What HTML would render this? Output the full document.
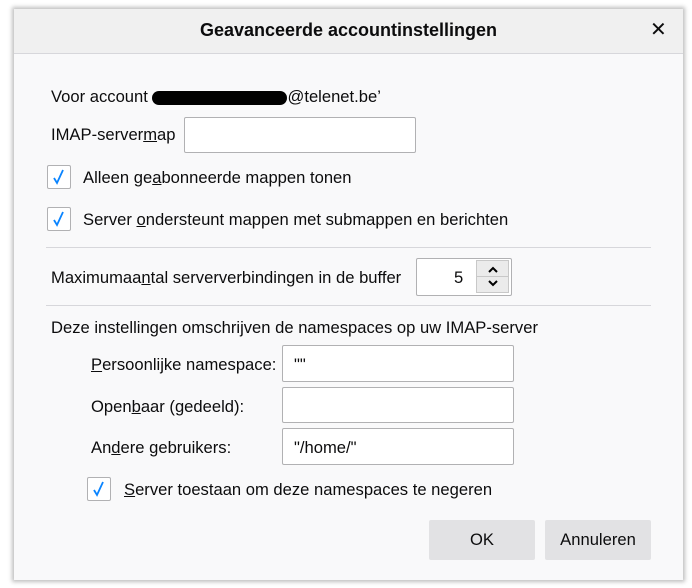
<html><head><style>
body{margin:0;width:692px;height:588px;background:#fff;position:relative;font-family:"Liberation Sans",sans-serif;font-size:16.6px;color:#0c0c0d;overflow:hidden}
.dlg{position:absolute;left:14px;top:9px;width:669px;height:571px;background:#f9f9fa;box-shadow:0 0 4px 2px rgba(0,0,0,.25)}
.hd{position:absolute;left:0;top:0;width:669px;height:44px;background:#f0f0f0;border-bottom:1px solid #d7d7db}
.a{position:absolute;white-space:nowrap}
.in{position:absolute;background:#fff;border:1px solid #b1b1b3;border-radius:2px;box-sizing:border-box}
.cb{position:absolute;width:24px;height:24px;background:#fff;border:1px solid #b1b1b3;border-radius:2px;box-sizing:border-box}
.hr{position:absolute;left:32px;width:605px;height:1px;background:#d7d7db}
.btn{position:absolute;background:#e2e2e4;border-radius:2px;text-align:center;line-height:40px;height:40px}
u{text-decoration:underline}
</style></head><body>
<div class="dlg">
<div class="hd"><div class="a" style="left:0;width:669px;text-align:center;top:11px;font-size:18px;font-weight:bold">Geavanceerde accountinstellingen</div>
<div class="a" style="left:636px;top:8px;font-size:20px">✕</div></div>
</div>
<div class="a" style="left:51px;top:87px">Voor account <span style="display:inline-block;width:135px;height:14px;background:#000;border-radius:8px;vertical-align:middle"></span>@telenet.be’</div>
<div class="a" style="left:51px;top:125px">IMAP-server<u>m</u>ap</div>
<div class="in" style="left:184px;top:117px;width:232px;height:36px"></div>
<div class="cb" style="left:47px;top:165px"><svg width="22" height="22"><path d="M6 12l3 5 6-13" fill="none" stroke="#0a84ff" stroke-width="1.8"/></svg></div>
<div class="a" style="left:83px;top:168px">Alleen ge<u>a</u>bonneerde mappen tonen</div>
<div class="cb" style="left:47px;top:207px"><svg width="22" height="22"><path d="M6 12l3 5 6-13" fill="none" stroke="#0a84ff" stroke-width="1.8"/></svg></div>
<div class="a" style="left:83px;top:210px">Server <u>o</u>ndersteunt mappen met submappen en berichten</div>
<div class="hr" style="top:247px;left:46px"></div>
<div class="a" style="left:51px;top:268px">Maximumaa<u>n</u>tal serververbindingen in de buffer</div>
<div class="in" style="left:416px;top:258px;width:96px;height:38px"></div>
<div class="a" style="left:454px;top:268px">5</div>
<div class="a" style="left:476px;top:260px;width:33px;height:33px;background:#ebebeb;border:1px solid #c8c8c8;box-sizing:border-box">
<svg width="31" height="31"><path d="M12 11l4-4 4 4M12 20l4 4 4-4" fill="none" stroke="#000" stroke-width="2"/><path d="M0 15.5h31" stroke="#c8c8c8"/></svg></div>
<div class="hr" style="top:305px;left:46px"></div>
<div class="a" style="left:51px;top:318px">Deze instellingen omschrijven de namespaces op uw IMAP-server</div>
<div class="a" style="left:91px;top:355px"><u>P</u>ersoonlijke namespace:</div>
<div class="in" style="left:282px;top:345px;width:232px;height:37px"></div>
<div class="a" style="left:294px;top:355px">""</div>
<div class="a" style="left:91px;top:397px">Open<u>b</u>aar (gedeeld):</div>
<div class="in" style="left:282px;top:387px;width:232px;height:36px"></div>
<div class="a" style="left:91px;top:438px">An<u>d</u>ere gebruikers:</div>
<div class="in" style="left:282px;top:428px;width:232px;height:37px"></div>
<div class="a" style="left:294px;top:438px">"/home/"</div>
<div class="cb" style="left:87px;top:477px"><svg width="22" height="22"><path d="M6 12l3 5 6-13" fill="none" stroke="#0a84ff" stroke-width="1.8"/></svg></div>
<div class="a" style="left:124px;top:480px"><u>S</u>erver toestaan om deze namespaces te negeren</div>
<div class="btn" style="left:429px;top:520px;width:106px">OK</div>
<div class="btn" style="left:545px;top:520px;width:106px">Annuleren</div>
</body></html>
